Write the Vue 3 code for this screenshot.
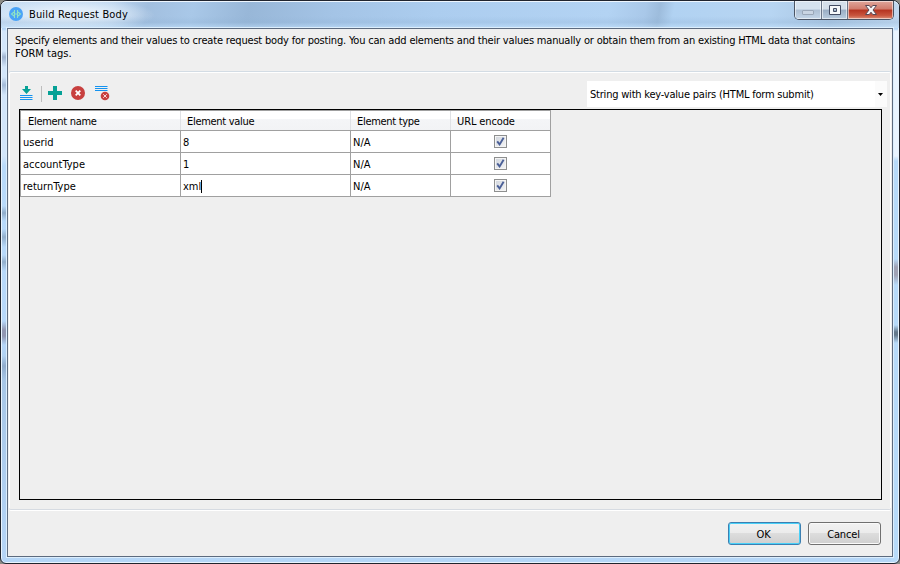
<script setup>
import { ref } from 'vue'

const columns = ['Element name', 'Element value', 'Element type', 'URL encode']
const rows = ref([
  { name: 'userid', value: '8', type: 'N/A', encode: true },
  { name: 'accountType', value: '1', type: 'N/A', encode: true },
  { name: 'returnType', value: 'xml', type: 'N/A', encode: true, editing: true },
])
</script>

<template>
  <div class="window">
    <header class="titlebar">
      <svg class="app-icon" width="14" height="14" viewBox="0 0 14 14">
        <circle cx="7" cy="7" r="7" fill="#4aa3f7" />
        <path d="M5.500 3v8M8.500 3v8M5 5L2.500 7 5 9M9 5l2.500 2L9 9M5 7h4" stroke="#8fe3c4" stroke-width="1.100" fill="none" />
      </svg>
      <h1 class="title">Build Request Body</h1>
      <div class="caption">
        <span class="cap min">
          <svg width="26" height="18" viewBox="0 0 26 18"><rect x="7.5" y="9.5" width="11" height="4" rx="0.5" fill="#c9d5e3" stroke="#9aa7b8" /></svg>
        </span>
        <span class="cap max">
          <svg width="25" height="18" viewBox="0 0 25 18"><path d="M7.500 4.500h11v9h-11z M11.500 7.500h3v3h-3z" fill="#f6f8fa" fill-rule="evenodd" stroke="#434c62" /></svg>
        </span>
        <span class="cap close">
          <svg width="45" height="18" viewBox="0 0 45 18"><path d="M17.500 4.500h3.800l1.700 2.300 1.700-2.300h3.800l-3.500 4.500 3.500 4.500h-3.800l-1.700-2.300-1.700 2.300h-3.800l3.500-4.500z" fill="#f5f5f7" stroke="#5a4854" /></svg>
        </span>
      </div>
    </header>

    <main class="client">
      <p class="intro">
        <span class="tight">Specify elements and their values to create request body for posting. You can add elements and their values manually or obtain them from an existing HTML data that contains</span><br>
        FORM tags.
      </p>

      <section class="body">
        <div class="toolbar">
          <svg class="tools" width="100" height="18" viewBox="0 0 100 18">
            <path d="M5 1h3v3h3L6.500 9 2 4h3z" fill="#06a196" />
            <g fill="#1593f0">
              <rect x="0" y="10" width="12.500" height="1" />
              <rect x="0" y="12" width="12.500" height="1" />
              <rect x="0" y="14" width="12.500" height="1" />
              <rect x="75" y="1" width="12.500" height="1" />
              <rect x="75" y="3" width="12.500" height="1" />
              <rect x="75" y="5" width="12.500" height="1" />
            </g>
            <path d="M21.500 1v16" stroke="#bdbdbd" fill="none" />
            <path d="M33 1h4v5h5v4h-5v5h-4v-5h-5v-4h5z" fill="#06a196" />
            <circle cx="58" cy="8" r="7" fill="#c8403f" />
            <path d="M55.700 5.700l4.600 4.600M60.300 5.700l-4.600 4.600" stroke="#fff" stroke-width="1.800" fill="none" />
            <circle cx="85" cy="11" r="4.300" fill="#c8403f" />
            <path d="M83.200 9.200l3.600 3.600M86.800 9.200l-3.600 3.600" stroke="#f6dada" stroke-width="1" fill="none" />
          </svg>
          <div class="combo">
            <span>String with key-value pairs (HTML form submit)</span>
            <span class="drop"><svg width="5" height="3" viewBox="0 0 5 3"><path d="M0 0h5L2.500 3z" fill="#000" /></svg></span>
          </div>
        </div>

        <div class="grid-area">
          <div class="grid">
            <div class="row head">
              <div v-for="c in columns" :key="c" class="cell">{{ c }}</div>
            </div>
            <div v-for="r in rows" :key="r.name" class="row">
              <div class="cell">{{ r.name }}</div>
              <div class="cell">{{ r.value }}<i v-if="r.editing" class="caret"></i></div>
              <div class="cell">{{ r.type }}</div>
              <div class="cell center">
                <span class="check" @click="r.encode = !r.encode">
                  <svg v-if="r.encode" width="9" height="9" viewBox="0 0 9 9"><path d="M1.200 4.300L3.600 7.400 7.600 0.800" fill="none" stroke="#4a5f97" stroke-width="1.900" /></svg>
                </span>
              </div>
            </div>
          </div>
        </div>
      </section>

      <footer class="actions">
        <button class="btn primary">OK</button>
        <button class="btn">Cancel</button>
      </footer>
    </main>
  </div>
</template>

<style>
body { background: #8b8b86; }
</style>

<style scoped>
* { box-sizing: border-box; }
.window {
  width: 900px;
  height: 564px;
  padding: 0 6px 6px;
  border: 1px solid #20242e;
  border-radius: 7px 7px 6px 6px;
  box-shadow: inset 0 0 0 1px #e9f4fe;
  display: flex;
  flex-direction: column;
  font-family: "DejaVu Sans Condensed", "DejaVu Sans", sans-serif;
  font-stretch: condensed;
  font-size: 11px;
  line-height: 13px;
  color: #000;
  background:
    linear-gradient(180deg, transparent 0 258px, #9fa2b5 266px, #9fa2b5 274px, transparent 284px 324px, #64798c 331px 334px, transparent 342px) right / 8px 100% no-repeat,
    linear-gradient(180deg, transparent 0 50px, #9fb3cf 56px, transparent 66px 76px, #a4bbd8 84px, transparent 94px 205px, #8fabc9 212px, transparent 220px 228px, #93afcc 236px, transparent 246px 254px, #93afcc 261px, transparent 270px 320px, #9298b3 329px 335px, transparent 344px 355px, #91accc 365px, transparent 380px) left / 7px 100% no-repeat,
    linear-gradient(180deg, transparent 28px, #e9f4ff 30px 155px, #b7daf9 160px) right / 8px 100% no-repeat,
    linear-gradient(180deg, transparent 28px, #d3e6fa 30px 155px, #b9dafa 165px, #b7d8fa 340px, #a8c7e7 380px, #b5d5f7) left / 7px 100% no-repeat,
    #b5d6f7;
}
.titlebar {
  height: 27px;
  margin: 0 -6px;
  padding-left: 8px;
  display: flex;
  border-radius: 6px 6px 0 0;
  border-top: 1px solid #eef6fe;
  background:
    linear-gradient(180deg, transparent 55%, rgba(140, 175, 210, .25) 78%, rgba(200, 230, 255, .5)),
    radial-gradient(ellipse 84px 17px at 70px 13px, rgba(228, 239, 250, .9) 40%, transparent),
    linear-gradient(100deg, #c8def4 0, #bcd5ef 110px, #a2bfdf 145px, #a9c8e8 190px, #98b7d8 245px, #a4c4e6 330px, #accdef 430px, #b3d3f3 600px, #a9c8e9 636px, #9dbcdc 650px, #b1d2f2 664px, #b7d5f2 760px, #a9c5e1 820px, #c2d9f0);
}
.app-icon { margin-top: 5px; }
.title {
  margin: 6px 0 0 6px;
  font: inherit;
  letter-spacing: 0.15px;
}
.caption {
  margin: -1px 5px 0 auto;
  width: 100px;
  height: 19px;
  display: flex;
  border: 1px solid #4b5565;
  border-top: 0;
  border-radius: 0 0 5px 5px;
  overflow: hidden;
}
.cap {
  box-shadow: inset 0 0 0 1px rgba(255, 255, 255, .55);
}
.cap svg { display: block; }
.min { width: 27px; border-right: 1px solid #6b7688; background: linear-gradient(#d5e2ef 45%, #adbfd3 50%, #c4d6e8); }
.max { width: 26px; border-right: 1px solid #6b7688; background: linear-gradient(#d5dfea 45%, #9aadc3 50%, #b9ccdf); }
.close { flex: 1; background: linear-gradient(#e0a69b, #d17b6c 45%, #b53320 50%, #c8553d 80%, #dc9079); }
.client {
  flex: 1;
  border: 1px solid #5d6b7f;
  box-shadow: 0 0 0 1px #dceefd;
  background: #efefef;
  display: flex;
  flex-direction: column;
}
.intro {
  margin: 0;
  height: 43px;
  padding: 5px 0 0 7px;
  white-space: nowrap;
}
.tight { letter-spacing: -0.19px; }
.body {
  height: 439px;
  margin: -1px 1px 0;
  padding: 8px 9px 0 10px;
  border-top: 1px solid #d3dce4;
  border-bottom: 1px solid #d6dbe2;
  border-radius: 2px;
  box-shadow: inset 1px 1px 0 #fff, inset -1px 0 0 #fff, 0 1px 0 #fff;
}
.toolbar {
  display: flex;
  justify-content: space-between;
  margin-right: -5px;
  height: 28px;
}
.tools { margin: 5px 0 0 1px; }
.combo {
  width: 300px;
  height: 26px;
  margin-top: 1px;
  padding-left: 3px;
  display: flex;
  justify-content: space-between;
  align-items: center;
  letter-spacing: -0.21px;
  background: #fff;
}
.drop {
  width: 12px;
  height: 26px;
  padding-left: 3px;
  display: flex;
  align-items: center;
  background: #fbfbfb;
}
.grid-area {
  height: 391px;
  width: 863px;
  margin-top: 1px;
  border: 1px solid #000;
}
.grid {
  width: 531px;
  border: 1px solid #a0a0a0;
  border-width: 1px 1px 0;
}
.row {
  display: grid;
  grid-template-columns: 160px 170px 100px 99px;
  height: 22px;
  background: #fff;
  border-bottom: 1px solid #a0a0a0;
}
.cell {
  padding: 1px 0 0 2px;
  display: flex;
  align-items: center;
  border-right: 1px solid #a0a0a0;
}
.cell:last-child { border-right: 0; }
.head {
  height: 20px;
  letter-spacing: -0.3px;
  background: linear-gradient(#fff 40%, #f4f5f7 45%, #f2f3f5);
}
.head .cell {
  padding: 2px 0 0 6px;
  border-right-color: #dfe1e5;
}
.head .cell:first-child { padding-left: 7px; }
.head .cell:last-child { letter-spacing: -0.12px; }
.row .center { justify-content: center; padding: 0; }
.check {
  width: 13px;
  height: 13px;
  padding: 1px;
  border: 1px solid #8e8f8f;
  background: linear-gradient(135deg, #cfd4dc, #f6f6f6);
  box-shadow: inset 0 0 0 1px #f4f4f4;
}
.check svg { display: block; }
.caret { width: 1px; height: 13px; background: #000; }
.actions {
  display: flex;
  justify-content: flex-end;
  gap: 7px;
  padding: 12px 11px 0 0;
}
.btn {
  width: 73px;
  height: 23px;
  padding: 2px 2px 0 0;
  font: inherit;
  letter-spacing: -0.15px;
  color: #000;
  border: 1px solid #707070;
  border-radius: 3px;
  background: linear-gradient(#f2f2f2, #ebebeb 50%, #dddddd 50%, #cfcfcf);
  box-shadow: inset 0 0 0 1px #fafafa;
}
.primary {
  border-color: #3c7fb1;
  box-shadow: inset 0 0 0 1px #48d0f8;
}
</style>
